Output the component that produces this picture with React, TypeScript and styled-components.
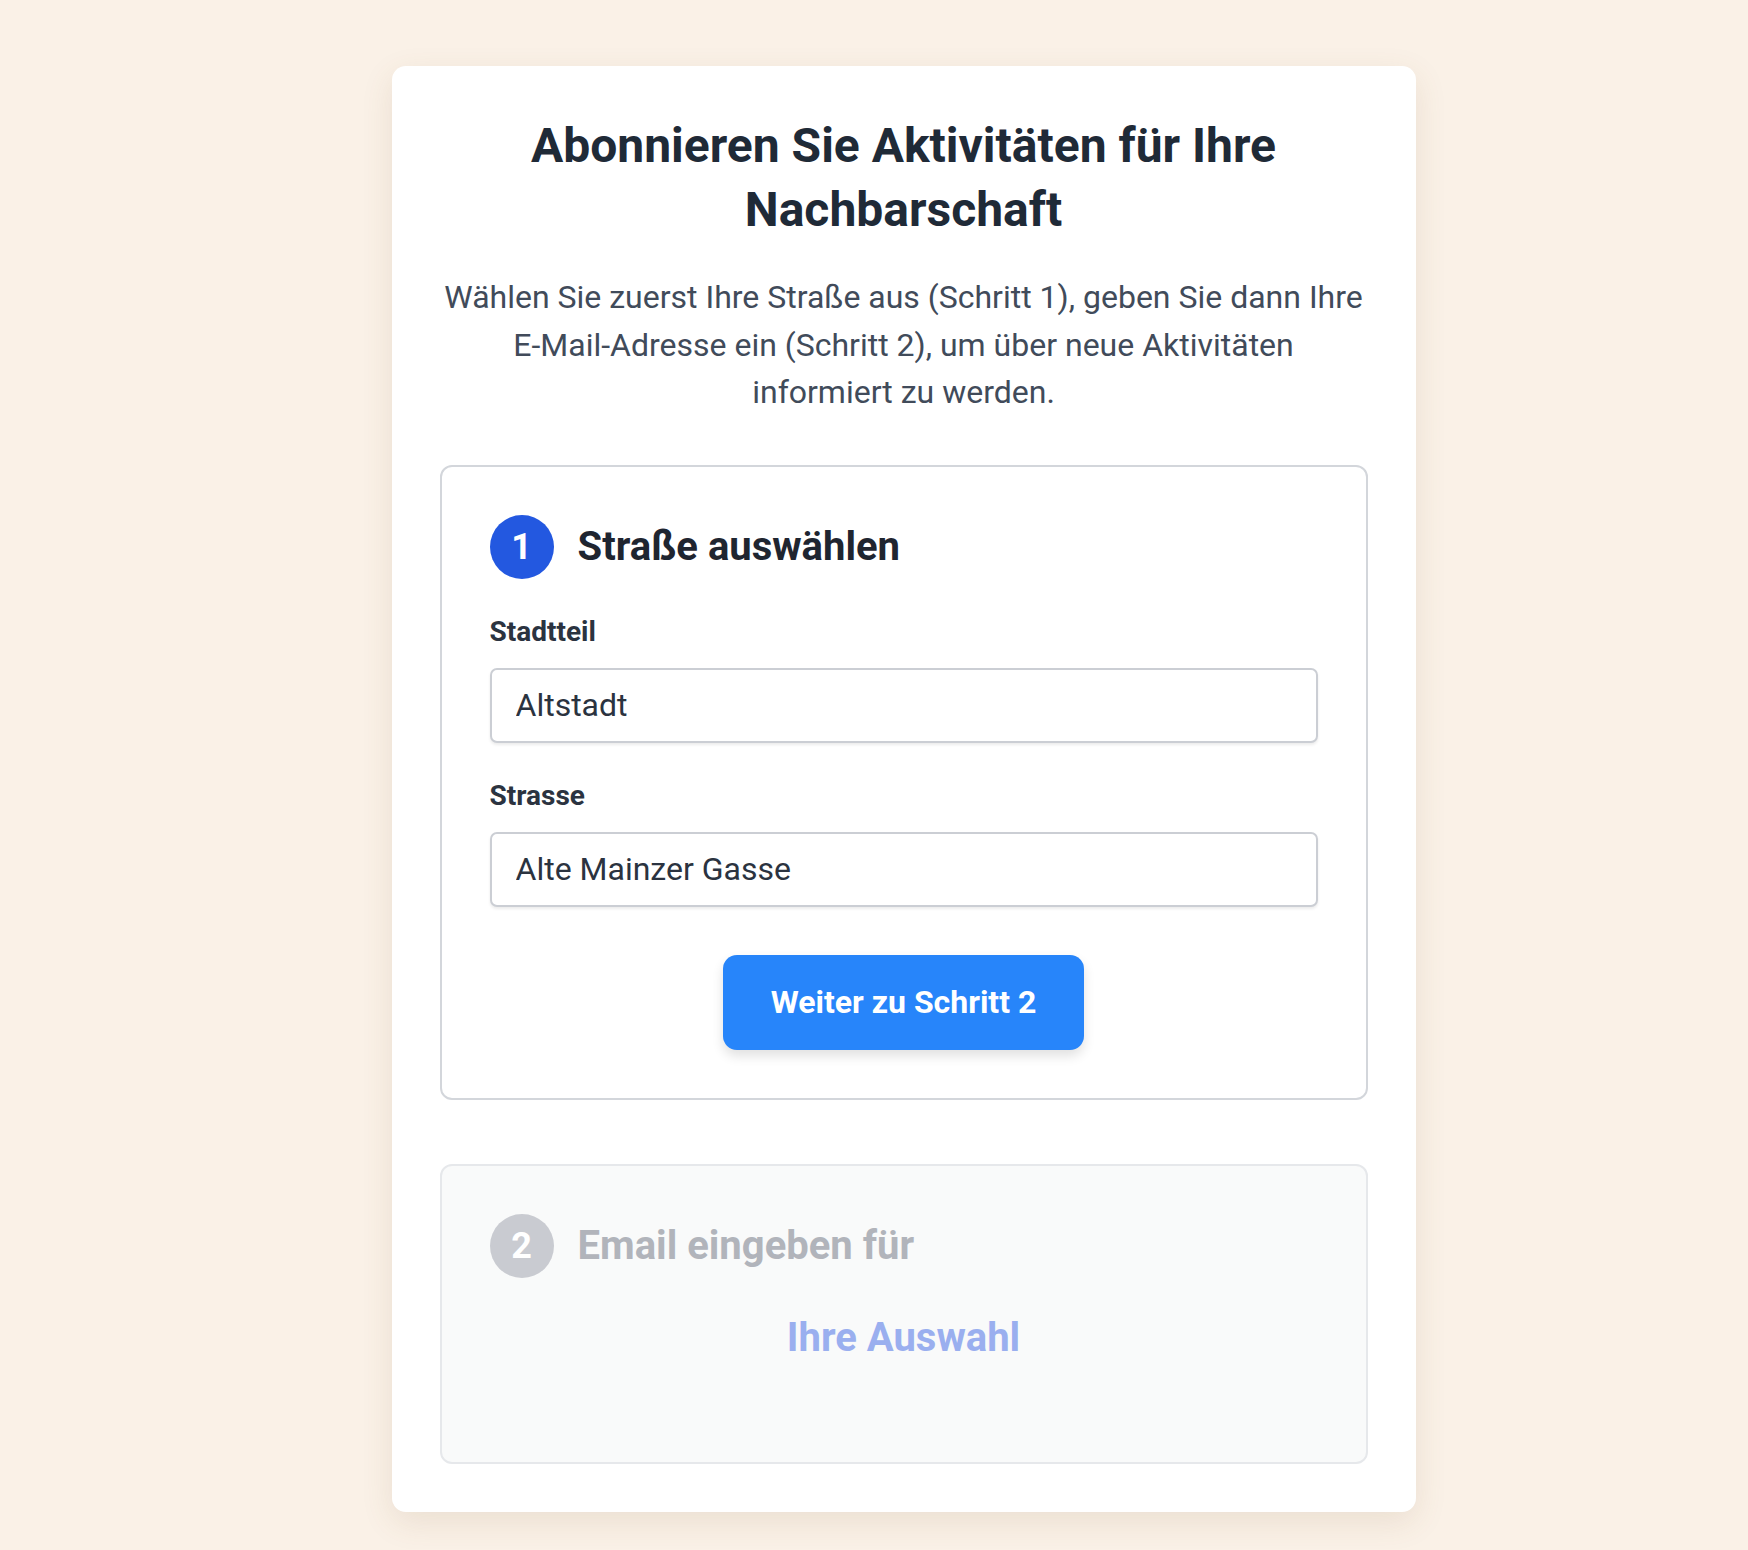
import React from "react";
import styled, { createGlobalStyle } from "styled-components";

const GlobalStyle = createGlobalStyle`
  html, body {
    margin: 0;
    padding: 0;
    background-color: #faf1e7;
    font-family: Roboto, "Liberation Sans", Arial, sans-serif;
  }
  * {
    box-sizing: border-box;
  }
`;

const Page = styled.div`
  display: flex;
  justify-content: center;
  padding: 66px 0 37px 59px;
`;

const Card = styled.div`
  width: 1024px;
  background-color: #ffffff;
  border-radius: 14px;
  padding: 48px;
  box-shadow: 0 10px 32px rgba(120, 90, 50, 0.12);
  display: flex;
  flex-direction: column;
`;

const Title = styled.h1`
  margin: 0;
  font-size: 48px;
  line-height: 64px;
  font-weight: 700;
  color: #1f2a37;
  text-align: center;
`;

const Intro = styled.p`
  margin: 32px 0 48px;
  font-size: 32px;
  line-height: 47.5px;
  color: #414b5a;
  text-align: center;
`;

const StepBox = styled.section<{ disabled?: boolean }>`
  border: 2px solid ${({ disabled }) => (disabled ? "#e6e8eb" : "#d3d6db")};
  border-radius: 12px;
  padding: 48px;
  background-color: ${({ disabled }) => (disabled ? "#f9fafa" : "#ffffff")};
  display: flex;
  flex-direction: column;
  & + & {
    margin-top: 64px;
  }
`;

const StepHeader = styled.div`
  display: flex;
  align-items: center;
  gap: 24px;
  height: 64px;
`;

const StepBadge = styled.div<{ disabled?: boolean }>`
  width: 64px;
  height: 64px;
  border-radius: 50%;
  background-color: ${({ disabled }) => (disabled ? "#c9cbd1" : "#2358e0")};
  color: #ffffff;
  font-size: 36px;
  font-weight: 700;
  display: flex;
  align-items: center;
  justify-content: center;
`;

const StepTitle = styled.h2<{ disabled?: boolean }>`
  margin: 0;
  font-size: 40px;
  font-weight: 700;
  color: ${({ disabled }) => (disabled ? "#b1b4bb" : "#1f2530")};
`;

const Field = styled.div`
  display: flex;
  flex-direction: column;
  margin-top: 32px;
`;

const Label = styled.label`
  font-size: 28px;
  line-height: 42px;
  font-weight: 700;
  color: #2b3340;
  margin-bottom: 15px;
`;

const Input = styled.input`
  height: 75px;
  border: 2px solid #cbced4;
  border-radius: 7px;
  padding: 0 24px;
  font-family: inherit;
  font-size: 32px;
  color: #2b3340;
  background-color: #ffffff;
  box-shadow: 0 2px 3px rgba(0, 0, 0, 0.08);
  outline: none;
`;

const Actions = styled.div`
  display: flex;
  justify-content: center;
  margin-top: 48px;
`;

const PrimaryButton = styled.button`
  border: none;
  border-radius: 14px;
  padding: 24px 48px;
  font-family: inherit;
  font-size: 32px;
  line-height: 47px;
  font-weight: 700;
  color: #ffffff;
  background-color: #2785fa;
  box-shadow: 0 6px 12px rgba(0, 0, 0, 0.12);
  cursor: pointer;
`;

const Selection = styled.div`
  margin: 30px 0 46px;
  font-size: 40px;
  line-height: 60px;
  font-weight: 700;
  color: #9aafef;
  text-align: center;
`;

export default function App() {
  return (
    <>
      <GlobalStyle />
      <Page>
        <Card>
          <Title>Abonnieren Sie Aktivitäten für Ihre Nachbarschaft</Title>
          <Intro>
            Wählen Sie zuerst Ihre Straße aus (Schritt 1), geben Sie dann Ihre
            E-Mail-Adresse ein (Schritt 2), um über neue Aktivitäten informiert
            zu werden.
          </Intro>

          <StepBox>
            <StepHeader>
              <StepBadge>1</StepBadge>
              <StepTitle>Straße auswählen</StepTitle>
            </StepHeader>
            <Field>
              <Label htmlFor="district">Stadtteil</Label>
              <Input id="district" defaultValue="Altstadt" readOnly />
            </Field>
            <Field>
              <Label htmlFor="street">Strasse</Label>
              <Input id="street" defaultValue="Alte Mainzer Gasse" readOnly />
            </Field>
            <Actions>
              <PrimaryButton type="button">Weiter zu Schritt 2</PrimaryButton>
            </Actions>
          </StepBox>

          <StepBox disabled>
            <StepHeader>
              <StepBadge disabled>2</StepBadge>
              <StepTitle disabled>Email eingeben für</StepTitle>
            </StepHeader>
            <Selection>Ihre Auswahl</Selection>
          </StepBox>
        </Card>
      </Page>
    </>
  );
}
